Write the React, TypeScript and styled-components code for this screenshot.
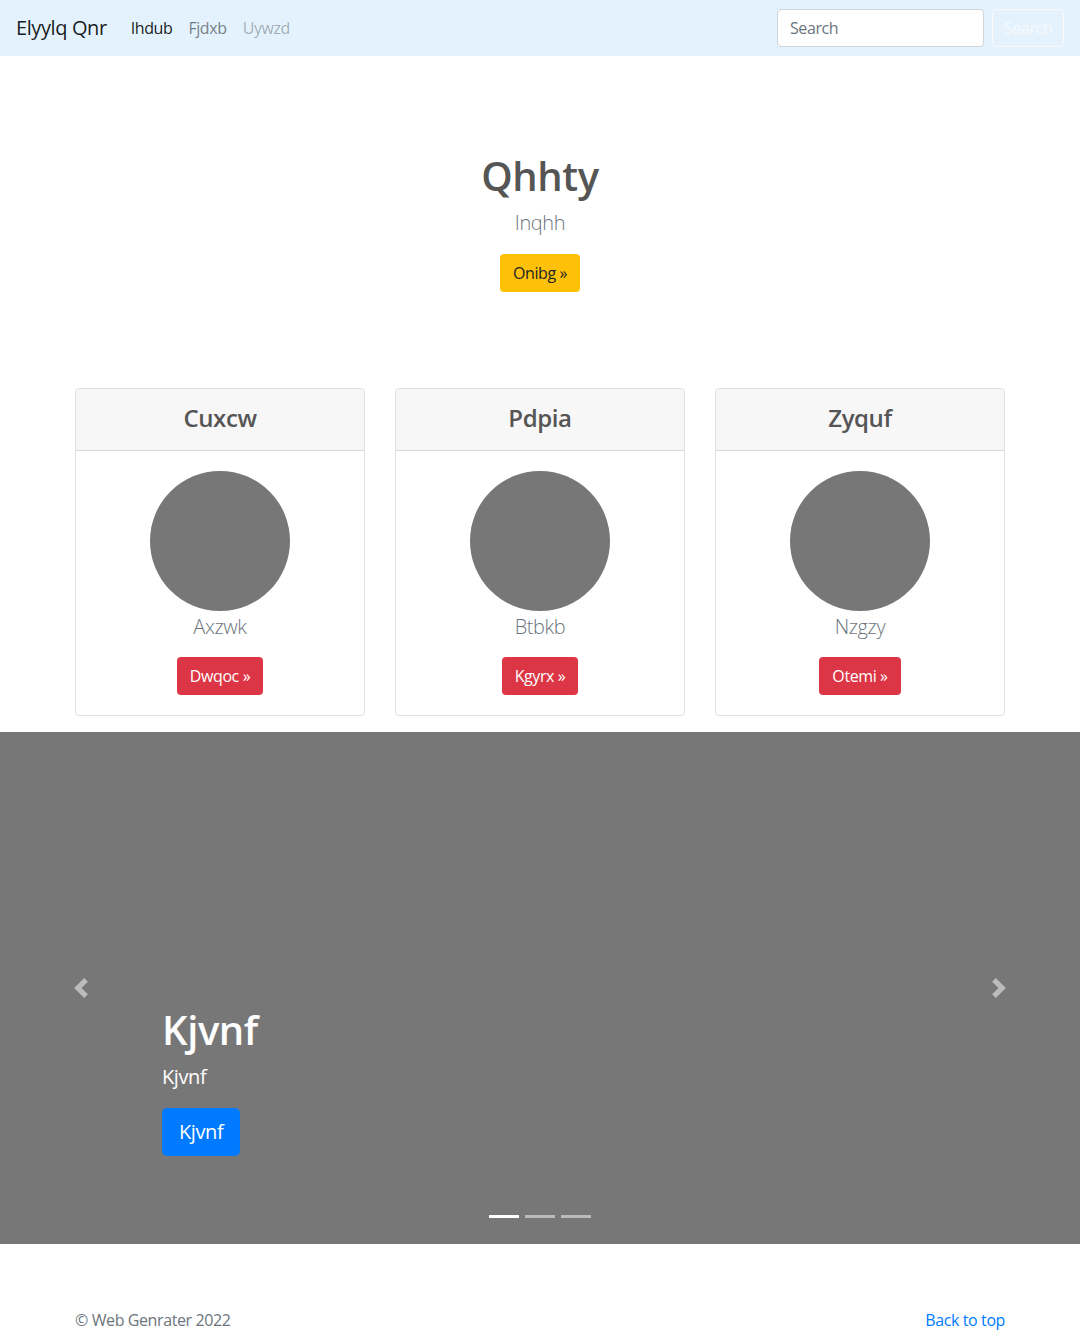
import React from "react";
import styled, { createGlobalStyle } from "styled-components";

const Global = createGlobalStyle`
  * { box-sizing: border-box; }
  body {
    margin: 0;
    font-family: "Open Sans", "Liberation Sans", sans-serif;
    font-size: 16px;
    line-height: 1.5;
    letter-spacing: -0.025em;
    color: #212529;
    background: #fff;
  }
  h1, h2, h3, h4, p { margin: 0; }
`;

const Navbar = styled.nav`
  height: 56px;
  background: #e3f2fd;
  display: flex;
  align-items: center;
  padding: 8px 16px;
`;

const Brand = styled.a`
  font-size: 20px;
  line-height: 30px;
  color: rgba(0, 0, 0, 0.9);
  margin-right: 16px;
  text-decoration: none;
`;

const NavList = styled.ul`
  list-style: none;
  margin: 0;
  padding: 0;
  display: flex;
`;

const NavLink = styled.a<{ $state: "active" | "normal" | "disabled" }>`
  display: block;
  padding: 8px;
  text-decoration: none;
  color: ${(p) =>
    p.$state === "active"
      ? "rgba(0,0,0,.9)"
      : p.$state === "disabled"
      ? "rgba(0,0,0,.3)"
      : "rgba(0,0,0,.5)"};
`;

const SearchForm = styled.form`
  margin-left: auto;
  display: flex;
  gap: 8px;
`;

const SearchInput = styled.input`
  width: 207px;
  height: 38px;
  padding: 6px 12px;
  font: inherit;
  font-size: 16px;
  letter-spacing: -0.025em;
  color: #495057;
  background: #fff;
  border: 1px solid #ced4da;
  border-radius: 4px;
  &::placeholder { color: #6c757d; }
`;

const OutlineButton = styled.button`
  width: 72px;
  height: 38px;
  padding: 6px 0;
  font: inherit;
  font-size: 16px;
  letter-spacing: -0.025em;
  color: #f8f9fa;
  background: transparent;
  border: 1px solid #f8f9fa;
  border-radius: 4px;
`;

const Hero = styled.section`
  padding: 96px 0;
  text-align: center;
  display: flex;
  flex-direction: column;
  align-items: center;
`;

const HeroTitle = styled.h1`
  font-size: 40px;
  line-height: 48px;
  font-weight: 600;
  color: #555;
  margin-bottom: 8px;
`;

const Lead = styled.p`
  font-size: 20px;
  line-height: 30px;
  font-weight: 300;
  color: #6c757d;
  margin-bottom: 16px;
`;

const Btn = styled.a<{ $variant: "warning" | "danger" | "primary"; $large?: boolean }>`
  display: inline-block;
  text-decoration: none;
  border-radius: ${(p) => (p.$large ? "5px" : "4px")};
  padding: ${(p) => (p.$large ? "8px 16px" : "6px 12px")};
  font-size: ${(p) => (p.$large ? "20px" : "16px")};
  line-height: ${(p) => (p.$large ? "30px" : "24px")};
  border: 1px solid transparent;
  background: ${(p) =>
    p.$variant === "warning" ? "#ffc107" : p.$variant === "danger" ? "#dc3545" : "#007bff"};
  color: ${(p) => (p.$variant === "warning" ? "#212529" : "#fff")};
`;

const Container = styled.div`
  width: 930px;
  margin: 0 auto;
`;

const CardGrid = styled.div`
  display: grid;
  grid-template-columns: repeat(3, 1fr);
  gap: 30px;
  margin-bottom: 16px;
`;

const Card = styled.div`
  border: 1px solid rgba(0, 0, 0, 0.125);
  border-radius: 4px;
  text-align: center;
  overflow: hidden;
`;

const CardHeader = styled.div`
  background: rgba(0, 0, 0, 0.03);
  border-bottom: 1px solid rgba(0, 0, 0, 0.125);
  padding: 14px 20px 17px;
`;

const CardTitle = styled.h4`
  font-size: 24px;
  line-height: 30px;
  font-weight: 600;
  color: #555;
`;

const CardBody = styled.div`
  padding: 20px;
  display: flex;
  flex-direction: column;
  align-items: center;
`;

const Avatar = styled.div`
  width: 140px;
  height: 140px;
  border-radius: 50%;
  background: #777;
  margin-bottom: 1px;
`;

const CardText = styled.p`
  font-size: 20px;
  line-height: 30px;
  font-weight: 300;
  color: #6c757d;
  margin-bottom: 15px;
`;

const Carousel = styled.div`
  position: relative;
  height: 512px;
  background: #777;
  display: flex;
  align-items: flex-end;
  padding: 0 15% 52px;
  margin-bottom: 64px;
`;

const Caption = styled.div`
  color: #fff;
  padding: 20px 0;
  text-align: left;
`;

const CaptionTitle = styled.h1`
  font-size: 40px;
  line-height: 48px;
  font-weight: 600;
  margin-bottom: 8px;
`;

const CaptionText = styled.p`
  font-size: 20px;
  line-height: 30px;
  margin-bottom: 16px;
`;

const Control = styled.a<{ $side: "left" | "right" }>`
  position: absolute;
  top: 0;
  bottom: 0;
  ${(p) => p.$side}: 0;
  width: 15%;
  display: flex;
  align-items: center;
  justify-content: center;
  opacity: 0.5;
`;

const Indicators = styled.ol`
  position: absolute;
  left: 0;
  right: 0;
  bottom: 16px;
  margin: 0;
  padding: 0;
  list-style: none;
  display: flex;
  justify-content: center;
`;

const Indicator = styled.li<{ $active?: boolean }>`
  width: 30px;
  height: 3px;
  margin: 10px 3px;
  background: #fff;
  opacity: ${(p) => (p.$active ? 1 : 0.5)};
`;

const Footer = styled.footer`
  padding-bottom: 48px;
`;

const FooterRow = styled.div`
  display: flex;
  justify-content: space-between;
  color: #6c757d;
`;

const FooterLink = styled.a`
  color: #007bff;
  text-decoration: none;
`;

const Chevron = ({ dir }: { dir: "left" | "right" }) => (
  <svg width="20" height="20" viewBox="0 0 8 8" fill="#fff">
    {dir === "left" ? (
      <path d="M5.25 0l-4 4 4 4 1.5-1.5L4.25 4l2.5-2.5L5.25 0z" />
    ) : (
      <path d="M2.75 0l-1.5 1.5L3.75 4l-2.5 2.5L2.75 8l4-4-4-4z" />
    )}
  </svg>
);

const cards = [
  { title: "Cuxcw", text: "Axzwk", btn: "Dwqoc" },
  { title: "Pdpia", text: "Btbkb", btn: "Kgyrx" },
  { title: "Zyquf", text: "Nzgzy", btn: "Otemi" },
];

export default function App() {
  return (
    <>
      <Global />
      <Navbar>
        <Brand href="#">Elyylq Qnr</Brand>
        <NavList>
          <li><NavLink $state="active" href="#">Ihdub</NavLink></li>
          <li><NavLink $state="normal" href="#">Fjdxb</NavLink></li>
          <li><NavLink $state="disabled" href="#">Uywzd</NavLink></li>
        </NavList>
        <SearchForm onSubmit={(e) => e.preventDefault()}>
          <SearchInput placeholder="Search" />
          <OutlineButton type="submit">Search</OutlineButton>
        </SearchForm>
      </Navbar>

      <Hero>
        <HeroTitle>Qhhty</HeroTitle>
        <Lead>Inqhh</Lead>
        <Btn $variant="warning" href="#">Onibg »</Btn>
      </Hero>

      <Container>
        <CardGrid>
          {cards.map((c) => (
            <Card key={c.title}>
              <CardHeader>
                <CardTitle>{c.title}</CardTitle>
              </CardHeader>
              <CardBody>
                <Avatar />
                <CardText>{c.text}</CardText>
                <Btn $variant="danger" href="#">{c.btn} »</Btn>
              </CardBody>
            </Card>
          ))}
        </CardGrid>
      </Container>

      <Carousel>
        <Control $side="left" href="#"><Chevron dir="left" /></Control>
        <Caption>
          <CaptionTitle>Kjvnf</CaptionTitle>
          <CaptionText>Kjvnf</CaptionText>
          <CaptionText>
            <Btn $variant="primary" $large href="#">Kjvnf</Btn>
          </CaptionText>
        </Caption>
        <Control $side="right" href="#"><Chevron dir="right" /></Control>
        <Indicators>
          <Indicator $active />
          <Indicator />
          <Indicator />
        </Indicators>
      </Carousel>

      <Footer>
        <Container>
          <FooterRow>
            <span>© Web Genrater 2022</span>
            <FooterLink href="#">Back to top</FooterLink>
          </FooterRow>
        </Container>
      </Footer>
    </>
  );
}
